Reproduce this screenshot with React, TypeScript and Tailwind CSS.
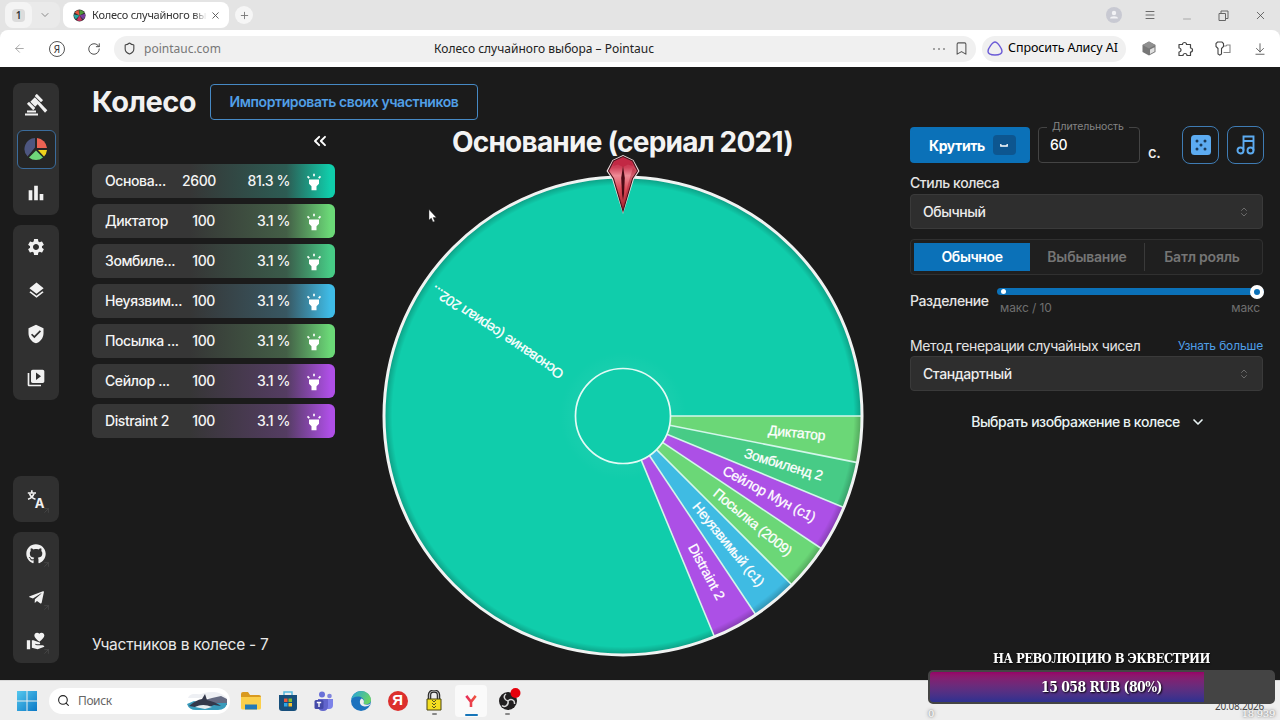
import type { ReactNode } from "react";
import {
  MdBarChart,
  MdHighlight,
  MdLayers,
  MdSettings,
  MdVerifiedUser,
  MdVideoLibrary,
  MdVolunteerActivism,
} from "react-icons/md";
import { FaGithub, FaTelegramPlane } from "react-icons/fa";
import {
  ArrowDownToLine,
  ArrowLeft,
  ArrowUpRight,
  Bookmark,
  ChevronDown,
  ChevronsLeft,
  ChevronsUpDown,
  Menu,
  Minus,
  Plus,
  RotateCw,
  Search,
  Shield,
  X,
} from "lucide-react";

const lots = [
  { name: "Основа...", amount: "2600", chance: "81.3 %", fade: "via-[#10cdab]/25 to-[#10cdab]" },
  { name: "Диктатор", amount: "100", chance: "3.1 %", fade: "via-[#6bd877]/25 to-[#6bd877]" },
  { name: "Зомбиле...", amount: "100", chance: "3.1 %", fade: "via-[#47cb86]/25 to-[#47cb86]" },
  { name: "Неуязвим...", amount: "100", chance: "3.1 %", fade: "via-[#3fbbe6]/25 to-[#3fbbe6]" },
  { name: "Посылка ...", amount: "100", chance: "3.1 %", fade: "via-[#6bd877]/25 to-[#6bd877]" },
  { name: "Сейлор ...", amount: "100", chance: "3.1 %", fade: "via-[#ae4fe6]/25 to-[#ae4fe6]" },
  { name: "Distraint 2", amount: "100", chance: "3.1 %", fade: "via-[#ae4fe6]/25 to-[#ae4fe6]" },
];

// from / to are the radii between which the label runs
const slices = [
  { label: "Диктатор", weight: 100, color: "#6bd777", from: 146, to: 203 },
  { label: "Зомбиленд 2", weight: 100, color: "#47cb86", from: 127, to: 208 },
  { label: "Сейлор Мун (с1)", weight: 100, color: "#ac50e6", from: 114, to: 217 },
  { label: "Посылка (2009)", weight: 100, color: "#6bd777", from: 119, to: 216 },
  { label: "Неуязвимый (с1)", weight: 100, color: "#3fbbe3", from: 114, to: 218 },
  { label: "Distraint 2", weight: 100, color: "#ac50e6", from: 146, to: 207 },
  { label: "Основание (сериал 202...", weight: 2600, color: "#10cdab", from: 73, to: 229 },
];

const R = 239;
const HUB = 47.5;

function point(r: number, deg: number) {
  const a = (deg * Math.PI) / 180;
  return `${(r * Math.cos(a)).toFixed(2)} ${(r * Math.sin(a)).toFixed(2)}`;
}

function Wheel() {
  const total = slices.reduce((sum, s) => sum + s.weight, 0);
  let angle = 0;
  const parts = slices.map((s) => {
    const start = angle;
    angle += (s.weight / total) * 360;
    return { ...s, start, end: angle };
  });

  return (
    <svg className="block" width="484" height="484" viewBox="-242 -242 484 484">
      <defs>
        <radialGradient id="edge" gradientUnits="userSpaceOnUse" cx="0" cy="0" r={R}>
          <stop offset="0.965" stopColor="#000" stopOpacity="0" />
          <stop offset="1" stopColor="#000" stopOpacity="0.25" />
        </radialGradient>
        <radialGradient id="glow" gradientUnits="userSpaceOnUse" cx="0" cy="0" r="64">
          <stop offset="0.7" stopColor="#fff" stopOpacity="0.04" />
          <stop offset="1" stopColor="#fff" stopOpacity="0" />
        </radialGradient>
      </defs>
      {parts.map((p) => (
        <path
          key={p.label}
          d={`M0 0L${point(R, p.start)}A${R} ${R} 0 ${p.end - p.start > 180 ? 1 : 0} 1 ${point(R, p.end)}Z`}
          fill={p.color}
        />
      ))}
      <circle r={R} fill="url(#edge)" />
      <circle r="64" fill="url(#glow)" />
      {parts.map((p) => (
        <path
          key={p.label}
          d={`M${point(HUB, p.start)}L${point(R, p.start)}`}
          stroke="#d3f7ea"
          strokeWidth="1.6"
        />
      ))}
      <circle r={R} fill="none" stroke="#f0f3f2" strokeWidth="3" />
      <circle r={HUB} fill="#10cdab" stroke="#e2fbf5" strokeWidth="1.7" />
      {parts.map((p) => (
        <text
          key={p.label}
          transform={`rotate(${(p.start + p.end) / 2})`}
          x={p.from}
          y="4.5"
          textLength={p.to - p.from}
          className="fill-white stroke-white/60 font-['Liberation_Sans',sans-serif] text-[14px]"
          strokeWidth="0.5"
        >
          {p.label}
        </text>
      ))}
    </svg>
  );
}

function Pointer() {
  return (
    <svg className="absolute top-[-20px] left-[225px]" width="34" height="61" viewBox="0 0 34 61">
      <defs>
        <linearGradient id="gem" x1="0" y1="0" x2="0" y2="1">
          <stop offset="0" stopColor="#b3243f" />
          <stop offset="0.2" stopColor="#cf4058" />
          <stop offset="0.35" stopColor="#ee8a96" />
          <stop offset="0.6" stopColor="#dd4a58" />
          <stop offset="1" stopColor="#a01f2c" />
        </linearGradient>
      </defs>
      <path d="M17 1L27.500 6L33.500 17L28 25L17 60L6 25L0.500 17L6.500 6Z" fill="#efdfe0" />
      <path
        d="M17 2.500L26.500 7L31.500 17L26.500 24.500L17 57L7.500 24.500L2.500 17L7.500 7Z"
        fill="url(#gem)"
        stroke="#4a101a"
        strokeWidth="1.100"
      />
      <path d="M17 3.500L25.500 7.500L27 12L22 10.500L17 13L12 10.500L7 12L8.500 7.500Z" fill="#c22844" />
      <path d="M27 14L30.500 17L26 24L17 54L22 30Z" fill="#a51b30" opacity="0.400" />
      <path d="M17 12L18.800 24L18 40L17 46L16 40L15.200 24Z" fill="#4a0a14" />
    </svg>
  );
}

function NavItem({ children, active, arrow }: { children: ReactNode; active?: boolean; arrow?: boolean }) {
  return (
    <div className="relative flex flex-1 items-center justify-center">
      <div
        className={
          active
            ? "flex h-[39px] w-[39px] items-center justify-center rounded-md border border-[#3b6c9c] bg-[#252525]"
            : "flex items-center justify-center"
        }
      >
        {children}
      </div>
      {arrow && <ArrowUpRight className="absolute right-[8px] bottom-[7px] text-[#4b4b4b]" size={9} />}
    </div>
  );
}

function Sidebar() {
  const group = "flex w-[46px] flex-col rounded-lg bg-[#303030]";
  return (
    <nav className="flex w-[46px] shrink-0 flex-col text-[#f1f1f1]">
      <div className={`${group} h-[132px]`}>
        <NavItem>
          <svg width="24" height="24" viewBox="0 0 24 24" fill="currentColor">
            <g transform="translate(11 9) rotate(45)">
              <rect x="-4.500" y="-7" width="9" height="3" rx="0.700" />
              <rect x="-3.400" y="-3.200" width="6.800" height="6.400" />
              <rect x="-4.500" y="4" width="9" height="3" rx="0.700" />
            </g>
            <path d="M13 10.500L15 8.500L23.300 17.200L21 19.700Z" />
            <path d="M3 17.500H12V19.500H3ZM1 20.500H14V22.500H1Z" />
          </svg>
        </NavItem>
        <NavItem active>
          <svg width="24" height="24" viewBox="-12 -12 24 24">
            <path d="M-1 -1.500L-1 -11A11 11 0 0 0 -8.500 7.500Z" fill="#4d5680" />
            <path d="M1 -1V-11A11 11 0 0 1 11 -1Z" fill="#ec6253" />
            <path d="M2 1H11A11 11 0 0 1 8 7.500Z" fill="#f0d21c" />
            <path d="M0 1.500L7 8.500A11 11 0 0 1 -7 8.500Z" fill="#6fd67a" />
          </svg>
        </NavItem>
        <NavItem><MdBarChart size={22} /></NavItem>
      </div>
      <div className={`${group} mt-[10px] h-[175px]`}>
        <NavItem><MdSettings size={20} /></NavItem>
        <NavItem><MdLayers size={19} /></NavItem>
        <NavItem><MdVerifiedUser size={20} /></NavItem>
        <NavItem><MdVideoLibrary size={20} /></NavItem>
      </div>
      <div className={`${group} mt-[76px] h-[46px]`}>
        <NavItem arrow>
          <svg width="20" height="20" viewBox="0 0 20 20" fill="currentColor">
            <g fill="none" stroke="currentColor" strokeWidth="1.700">
              <path d="M5.800 1.200V3.500M1.800 4H10" />
              <path d="M3.500 4.500Q5 9 9.500 10.200M8 4.500Q6.500 9 2 10.200" />
            </g>
            <text x="8.800" y="18.500" className="font-['Inter',sans-serif] text-[13px] font-bold">A</text>
          </svg>
        </NavItem>
      </div>
      <div className={`${group} mt-[10px] h-[131px]`}>
        <NavItem arrow><FaGithub size={20} /></NavItem>
        <NavItem arrow><FaTelegramPlane size={17} /></NavItem>
        <NavItem arrow><MdVolunteerActivism size={20} /></NavItem>
      </div>
    </nav>
  );
}

function LotList() {
  return (
    <div className="flex w-[243px] shrink-0 flex-col">
      <div className="flex h-[45px] justify-end pt-[12px] pr-[5px]">
        <ChevronsLeft size={20} strokeWidth={2.3} className="text-white" />
      </div>
      <ul className="flex flex-col gap-[6px] text-[14px] font-medium text-[#f4f4f4]">
        {lots.map((lot) => (
          <li
            key={lot.name}
            className={`flex h-[34px] items-center rounded-md bg-[#363636] bg-linear-to-r from-transparent from-40% via-80% ${lot.fade} to-98% pr-[11px] pb-px pl-[13px]`}
          >
            <span className="w-[77px] whitespace-nowrap">{lot.name}</span>
            <span className="w-[33px] text-right">{lot.amount}</span>
            <span className="flex-1 text-right">{lot.chance}</span>
            <MdHighlight size={20} className="mt-[3px] ml-[14px] text-white" />
          </li>
        ))}
      </ul>
    </div>
  );
}

function Select({ value }: { value: string }) {
  return (
    <div className="flex h-[35px] items-center justify-between rounded border border-[#3a3a3a] bg-[#2e2e2e] px-[12px] text-[14px] font-medium text-[#ececec]">
      {value}
      <ChevronsUpDown size={12} className="text-[#6a6a6a]" />
    </div>
  );
}

function Controls() {
  return (
    <aside className="flex w-[353px] shrink-0 flex-col">
      <div className="-mr-px flex h-[47px] items-end">
        <button className="mb-[1px] flex h-[36px] w-[120px] items-center rounded bg-[#0b71b8] pl-[19px] text-[14px] font-bold text-white">
          Крутить
          <span className="ml-[8px] flex h-[20px] w-[23px] items-center justify-center rounded bg-[#0d5690]">
            <svg width="8" height="3" viewBox="0 0 8 3" fill="none" stroke="#fff" strokeWidth="1.300">
              <path d="M0.800 0V2H7.200V0" />
            </svg>
          </span>
        </button>
        <fieldset className="mb-[1px] ml-[8px] h-[42px] w-[102px] rounded border border-[#444] px-[8px]">
          <legend className="px-[5px] text-[10.500px] leading-[12px] tracking-[-0.1px] text-[#858585]">Длительность</legend>
          <span className="block pl-[3px] text-[14px] leading-[24px] font-medium text-white">60</span>
        </fieldset>
        <span className="ml-[8px] pb-[1px] text-[15px] leading-[20px] font-medium text-[#eee]">с.</span>
        <button className="ml-auto flex h-[38px] w-[37px] items-center justify-center rounded-lg border border-[#3f7cb4]">
          <svg width="20" height="20" viewBox="0 0 20 20">
            <rect width="20" height="20" rx="3.500" fill="#5cabf1" />
            <g fill="#1b3a58">
              <circle cx="6" cy="6" r="1.500" />
              <circle cx="14" cy="6" r="1.500" />
              <circle cx="10" cy="10" r="1.500" />
              <circle cx="6" cy="14" r="1.500" />
              <circle cx="14" cy="14" r="1.500" />
            </g>
          </svg>
        </button>
        <button className="ml-[8px] flex h-[38px] w-[37px] items-center justify-center rounded-lg border border-[#3f7cb4] text-[#5cabf1]">
          <svg width="20" height="20" viewBox="0 0 20 20" fill="none" stroke="currentColor" strokeWidth="1.900">
            <circle cx="4.500" cy="15.500" r="3" />
            <circle cx="14.500" cy="15.500" r="3" />
            <path d="M7.500 15.500V1.500H17.500V15.500M7.500 6H17.500" />
          </svg>
        </button>
      </div>

      <label className="mt-[9px] text-[14px] leading-[20px] font-medium text-[#e4e4e4]">Стиль колеса</label>
      <div className="mt-px"><Select value="Обычный" /></div>

      <div className="mt-[10px] flex h-[36px] items-center rounded border border-[#303030] bg-[#1f1f1f] px-[3px] text-center text-[14px] font-semibold text-[#757575]">
        <div className="h-[28px] w-[116px] bg-[#0b71b8] leading-[27px] text-white">Обычное</div>
        <div className="h-[28px] w-[115px] border-r border-[#3a3a3a] leading-[27px] tracking-[-0.2px]">Выбывание</div>
        <div className="h-[28px] flex-1 leading-[27px] tracking-[-0.2px]">Батл рояль</div>
      </div>

      <div className="mt-[9px] flex h-[47px]">
        <span className="w-[87px] pt-[7px] text-[14px] leading-[20px] font-medium text-[#e4e4e4]">Разделение</span>
        <div className="flex-1 pt-[4px]">
          <div className="-mr-px flex h-[7px] items-center justify-between rounded-full bg-[#0b71b8] pl-[4px]">
            <span className="h-[5px] w-[5px] rounded-full bg-white" />
            <span className="h-[14px] w-[14px] rounded-full border-[4px] border-white bg-[#0b71b8]" />
          </div>
          <div className="flex justify-between pt-[4px] pr-[3px] pl-[3px] text-[12px] leading-[18px] tracking-[-0.1px] text-[#6f6f6f]">
            <span>макс / 10</span>
            <span>макс</span>
          </div>
        </div>
      </div>

      <div className="mt-[5px] flex h-[20px] items-center justify-between leading-[20px]">
        <span className="text-[14px] tracking-[-0.4px] text-[#e4e4e4]">Метод генерации случайных чисел</span>
        <a className="text-[12px] tracking-[-0.15px] text-[#4f9fe8]">Узнать больше</a>
      </div>
      <Select value="Стандартный" />

      <button className="mt-[21px] flex items-center justify-center gap-[10px] pl-[4px] text-[14px] leading-[20px] font-medium tracking-[-0.45px] text-[#e9f3f4]">
        Выбрать изображение в колесе
        <ChevronDown size={16} strokeWidth={2.5} />
      </button>
    </aside>
  );
}

function BrowserBar() {
  return (
    <header className="h-[67px] shrink-0 bg-[#e4e4e4] font-['Noto_Sans',sans-serif] text-[#333]">
      <div className="flex h-[30px] items-center pr-[13px] pl-[5px]">
        <div className="flex h-[26px] w-[55px] items-center rounded-lg bg-[#eaeaea]">
          <div className="flex h-[26px] w-[27px] items-center justify-center rounded-lg bg-[#f4f4f4]">
            <span className="rounded bg-[#dcdcdc] px-[4px] text-[10px] leading-[13px] font-semibold">1</span>
          </div>
          <ChevronDown size={12} className="ml-[7px] text-[#888]" />
        </div>
        <div className="ml-[3px] flex h-[26px] w-[166px] items-center rounded-lg bg-white pl-[10px]">
          <svg className="shrink-0" width="13" height="13" viewBox="-7 -7 14 14">
            <circle r="6.500" fill="#333" />
            <path d="M0 0V-6A6 6 0 0 1 5 -3Z" fill="#4d9b3a" />
            <path d="M0 0L6 -2A6 6 0 0 1 4 4Z" fill="#7a3fa0" />
            <path d="M0 0L3 5A6 6 0 0 1 -3 5Z" fill="#c73562" />
            <path d="M0 0L-4 4A6 6 0 0 1 -6 -1Z" fill="#25a9a4" />
            <path d="M0 0L-5 -3A6 6 0 0 1 -1 -6Z" fill="#e3573e" />
          </svg>
          <div className="ml-[6px] w-[115px] shrink-0 overflow-hidden mask-r-from-88% text-[11px] tracking-[-0.25px] whitespace-nowrap">
            Колесо случайного выбора
          </div>
          <X size={11} className="ml-[3px] shrink-0 text-[#555]" />
        </div>
        <div className="ml-[6px] flex h-[18px] w-[18px] items-center justify-center rounded-full bg-[#f6f6f6]">
          <Plus size={11} className="text-[#777]" />
        </div>
        <div className="ml-auto flex items-center text-[#444]">
          <svg width="16" height="16" viewBox="0 0 16 16">
            <circle cx="8" cy="8" r="8" fill="#c8c9d2" />
            <circle cx="8" cy="6" r="2.200" fill="#f2f2f5" />
            <path d="M4 11.500C4 8.500 12 8.500 12 11.500Z" fill="#f2f2f5" />
          </svg>
          <Menu size={12} strokeWidth={1.5} className="ml-[22px]" />
          <Minus size={12} strokeWidth={1.3} className="mt-[7px] ml-[25px] text-[#888]" />
          <svg className="ml-[25px]" width="11" height="11" viewBox="0 0 11 11" fill="none" stroke="#666">
            <path d="M1 3.500H7.500V10.500H1ZM3 3V1H10V8.500H8" />
          </svg>
          <X size={13} strokeWidth={1.4} className="ml-[25px]" />
        </div>
      </div>

      <div className="flex h-[37px] items-center rounded-t-lg bg-white pr-[13px] pl-[13px]">
        <ArrowLeft size={13} strokeWidth={1.5} className="text-[#999]" />
        <span className="ml-[23px] flex h-[16px] w-[16px] items-center justify-center rounded-full border border-[#555] text-[10px] leading-none">Я</span>
        <RotateCw size={14} strokeWidth={1.6} className="ml-[22px] text-[#444]" />
        <div className="ml-[13px] flex h-[26px] w-[862px] items-center rounded-full bg-[#f0f0f0] pr-[7px] pl-[9px]">
          <Shield size={13} className="text-[#444]" />
          <span className="ml-[8px] w-[80px] text-[12px] text-[#777]">pointauc.com</span>
          <span className="ml-[209px] w-[222px] text-center text-[12px] whitespace-nowrap text-[#222]">
            Колесо случайного выбора – Pointauc
          </span>
          <span className="ml-auto flex gap-[3px]">
            <i className="h-[2px] w-[2px] rounded-full bg-[#888]" />
            <i className="h-[2px] w-[2px] rounded-full bg-[#888]" />
            <i className="h-[2px] w-[2px] rounded-full bg-[#888]" />
          </span>
          <Bookmark size={15} strokeWidth={1.7} className="ml-[9px] text-[#555]" />
        </div>
        <div className="ml-[6px] flex h-[26px] w-[144px] items-center rounded-full bg-[#f0f0f0] pl-[5px] text-[12.500px] tracking-[-0.1px] whitespace-nowrap text-black">
          <svg className="mr-[5px]" width="16" height="15" viewBox="0 0 16 15" fill="none" stroke="#6b5bd6" strokeWidth="1.400">
            <path d="M8 1C10.500 1 15 7.500 15 10.300C15 13.300 12 14 8 14S1 13.300 1 10.300C1 7.500 5.500 1 8 1Z" />
          </svg>
          Спросить Алису AI
        </div>
        <div className="ml-auto flex items-center text-[#444]">
          <svg width="14" height="15" viewBox="0 0 14 15">
            <path d="M7 0.500L13.500 4V11L7 14.500L0.500 11V4Z" fill="#777" />
            <path d="M0.500 4L7 7.500L13.500 4L7 0.500Z" fill="#909090" />
            <path d="M8 8.500L12.500 6.200V10.500L8 13Z" fill="#e0e0e0" />
          </svg>
          <svg className="ml-[22px]" width="16" height="16" viewBox="0 0 16 16" fill="none" stroke="currentColor" strokeWidth="1.200" strokeLinejoin="round">
            <path d="M1 3.500H4.500A2 2 0 1 1 8.500 3.500H12.500V7A2 2 0 1 1 12.500 11V14.500H9A2 2 0 0 0 5 14.500H1V11A2 2 0 0 0 1 7Z" />
          </svg>
          <svg className="ml-[21px]" width="16" height="15" viewBox="0 0 16 15" fill="none" stroke="currentColor" strokeWidth="1.100">
            <path d="M3 7.500L1 5.500V2.500L2.500 1H7L8.500 2.500V5.500L6.500 7.500V13L4.800 14.200L3 13Z" />
            <path d="M9 5H11L12 4H15V11.500H8.500" stroke="#888" />
          </svg>
          <ArrowDownToLine size={14} strokeWidth={1.4} className="ml-[22px]" />
        </div>
      </div>
    </header>
  );
}

function TaskIcon({ children, open, active }: { children: ReactNode; open?: boolean; active?: boolean }) {
  return (
    <div
      className={`relative flex h-[32px] w-[32px] items-center justify-center rounded ${active ? "bg-[#fafafa]" : ""}`}
    >
      {children}
      {open && <span className="absolute bottom-[2px] h-[2px] w-[5px] rounded-full bg-[#888]" />}
      {active && <span className="absolute bottom-[1px] h-[2px] w-[13px] rounded-full bg-[#1675b9]" />}
    </div>
  );
}

function Taskbar() {
  return (
    <footer className="flex h-[40px] shrink-0 items-center border-t border-[#d8d8d8] bg-[#eeeeee] pl-[17px]">
      <svg width="20" height="20" viewBox="0 0 20 20">
        <defs>
          <linearGradient id="win" x1="0" y1="0" x2="1" y2="1">
            <stop offset="0" stopColor="#55c8ee" />
            <stop offset="1" stopColor="#0a78c6" />
          </linearGradient>
        </defs>
        <path d="M0 0H9.500V9.500H0ZM10.500 0H20V9.500H10.500ZM0 10.500H9.500V20H0ZM10.500 10.500H20V20H10.500Z" fill="url(#win)" />
      </svg>
      <div className="ml-[12px] flex h-[26px] w-[181px] items-center rounded-full bg-white pr-[2px] pl-[8px]">
        <Search size={13} className="text-[#222]" />
        <span className="ml-[8px] flex-1 font-['Noto_Sans',sans-serif] text-[12px] tracking-[-0.4px] text-[#666]">Поиск</span>
        <svg width="41" height="20" viewBox="0 0 41 20">
          <path d="M2 5C7 1 11 5 17 2C26 0 34 1 40 7H1Z" fill="#eef0f4" />
          <path d="M17 9L25 7L34 5L40 8V14H17Z" fill="#656b82" />
          <path d="M0 13L7 10L15 12L40 12Q39 19 31 19H9Q2 19 0 13Z" fill="#389bbb" />
          <path d="M2 15Q9 9 15 8L18 3L20 9Q29 11 34 15L27 14L22 16Q14 13 8 16Z" fill="#34394b" />
          <path d="M8 16Q16 12 25 16L18 18Z" fill="#e9eef1" />
        </svg>
      </div>
      <div className="ml-[5px] flex gap-[4.700px]">
        <TaskIcon>
          <svg width="20" height="20" viewBox="0 0 20 20">
            <path d="M0 3Q0 1 2 1H7L9 4H18Q20 4 20 6V9H0Z" fill="#d99a20" />
            <path d="M0 6H20V17Q20 18.500 18 18.500H2Q0 18.500 0 17Z" fill="#fbcf4b" />
            <path d="M4 13.500H16V18.500H4Z" fill="#2379b8" />
          </svg>
        </TaskIcon>
        <TaskIcon>
          <svg width="20" height="20" viewBox="0 0 20 20">
            <path d="M6 5V1H14V5" fill="none" stroke="#55b9df" strokeWidth="1.500" />
            <path d="M1 4H19V17Q19 20 16 20H4Q1 20 1 17Z" fill="#174f7c" />
            <path d="M6 7.500H9.500V11H6Z" fill="#ee5739" />
            <path d="M10.500 7.500H14V11H10.500Z" fill="#83bd35" />
            <path d="M6 12H9.500V15.500H6Z" fill="#2fa6e7" />
            <path d="M10.500 12H14V15.500H10.500Z" fill="#fac12e" />
          </svg>
        </TaskIcon>
        <TaskIcon>
          <svg width="20" height="20" viewBox="0 0 20 20">
            <circle cx="8" cy="3.500" r="3" fill="#6970d8" />
            <circle cx="15.500" cy="5" r="2.300" fill="#7e83dd" />
            <path d="M11 8H19V14Q19 18 15 18H11Z" fill="#7c82e8" />
            <path d="M4 8H14V15Q14 20 9 20T4 15Z" fill="#6165cc" />
            <rect x="0.500" y="9" width="9" height="9" rx="1.500" fill="#444aa8" />
            <path d="M2.800 11.500H7.200M5 11.500V16" stroke="#fff" strokeWidth="1.300" />
          </svg>
        </TaskIcon>
        <TaskIcon>
          <svg width="20" height="20" viewBox="0 0 20 20">
            <defs>
              <linearGradient id="edgeTop" x1="0" y1="0" x2="1" y2="0.400">
                <stop offset="0" stopColor="#23a1df" />
                <stop offset="1" stopColor="#68d369" />
              </linearGradient>
            </defs>
            <circle cx="10" cy="10" r="10" fill="#1c72be" />
            <path d="M0.200 9C1 3.500 5.500 0 10 0C16 0 20 4.500 20 9C20 12 17 13.500 14.500 13.500C11.500 13.500 13 12 13 10C13 7.500 10 5.500 7 5.500C3.500 5.500 1 7 0.200 9Z" fill="url(#edgeTop)" />
            <path d="M10.500 7.500C8 9 8 15 13.500 15.500C16 15.700 18 14.500 18.500 14L19.500 12.500C17 14.500 11.500 14 12.800 11.500C13.500 9.500 12 8 10.500 7.500Z" fill="#eee" />
          </svg>
        </TaskIcon>
        <TaskIcon>
          <span className="flex h-[20px] w-[20px] items-center justify-center rounded-full bg-[#dc2f2d] font-['Liberation_Sans',sans-serif] text-[15px] font-bold text-white">Я</span>
        </TaskIcon>
        <TaskIcon open>
          <svg width="16" height="21" viewBox="0 0 16 21">
            <path d="M3.500 10V5A4.500 4 0 0 1 12.500 5V10" fill="none" stroke="#292929" strokeWidth="3.500" />
            <path d="M3.500 10V5A4.500 4 0 0 1 12.500 5V10" fill="none" stroke="#bbb" strokeWidth="1.200" />
            <path d="M1 9H15V20H1Z" fill="#f3de20" stroke="#4a4510" />
            <path d="M6 10L8 12L10 10M6 13L8 15L10 13M6 16L8 18L10 16" fill="none" stroke="#5a5420" />
          </svg>
        </TaskIcon>
        <TaskIcon active>
          <svg width="12" height="14" viewBox="0 0 14 16" fill="none" strokeWidth="3">
            <defs>
              <linearGradient id="ya" gradientUnits="userSpaceOnUse" x1="0" y1="0" x2="14" y2="0">
                <stop offset="0" stopColor="#e6285c" />
                <stop offset="1" stopColor="#f05a3c" />
              </linearGradient>
            </defs>
            <path d="M1.500 2L7 9L12.500 2M7 8V15" stroke="url(#ya)" />
          </svg>
        </TaskIcon>
        <TaskIcon open>
          <svg width="22" height="22" viewBox="0 0 22 22" className="overflow-visible">
            <circle cx="11" cy="11" r="9" fill="#211f20" />
            <g fill="none" stroke="#d8d8d8" strokeWidth="1.500">
              <path d="M11 11C7 10 6 6 9 4" />
              <path d="M11 11C14 8 18 10 17.500 14" />
              <path d="M11 11C12 15 8 18 5 15.500" />
            </g>
            <circle cx="18.500" cy="3" r="5" fill="#e5000b" />
          </svg>
        </TaskIcon>
      </div>
    </footer>
  );
}

// Stream widget floating over the desktop
function DonationGoal() {
  return (
    <div className="absolute top-[649px] left-[928px] w-[347px] font-['Roboto_Slab','DejaVu_Serif',serif] text-white">
      <div className="flex scale-x-86 justify-center text-[13.500px] leading-[18px] font-bold tracking-[-0.6px] whitespace-nowrap [text-shadow:0_1px_2px_#000]">
        НА РЕВОЛЮЦИЮ В ЭКВЕСТРИИ
      </div>
      <div className="relative mt-[3px] h-[34px] overflow-hidden rounded-[5px] border-2 border-[#444] bg-[#444]">
        <div className="h-full w-[80%] bg-linear-to-b from-[#970068] to-[#2d3090]" />
        <div className="absolute inset-0 scale-x-86 text-center text-[14.500px] leading-[30px] font-bold tracking-[-0.6px] [text-shadow:1px_1px_2px_#000]">
          15 058 RUB (80%)
        </div>
      </div>
      <div className="relative flex justify-between text-[10px] leading-[20px] tracking-[-0.3px] [text-shadow:0_0_2px_#777,0_0_4px_#888]">
        <span>0</span>
        <span>18 939</span>
        <span className="absolute top-[-8px] right-[11px] -z-10 font-['Noto_Sans',sans-serif] text-[10px] tracking-[-0.2px] text-[#444] [text-shadow:none]">
          20.08.2026
        </span>
      </div>
    </div>
  );
}

export default function App() {
  return (
    <div className="relative isolate flex h-[720px] w-[1280px] flex-col overflow-hidden bg-[#1b1b1b] font-['Inter',sans-serif]">
      <div className="-z-20 flex h-full flex-col">
        <BrowserBar />
        <main className="flex flex-1 pt-[16px] pr-[17px] pl-[13px] tracking-tight">
          <Sidebar />
          <div className="ml-[33px] flex flex-1 flex-col">
            <div className="flex h-[37px] items-center">
              <h1 className="w-[118px] text-[29px] font-bold tracking-[-0.5px] text-[#f1f1f1]">Колесо</h1>
              <button className="h-[36px] w-[268px] rounded border border-[#4689c4] text-[14px] font-semibold tracking-[-0.4px] whitespace-nowrap text-[#519fe6]">
                Импортировать своих участников
              </button>
            </div>
            <div className="-mt-[3px] flex h-[560px]">
              <div className="flex w-[243px] shrink-0 flex-col justify-between pt-[2px]">
                <LotList />
                <p className="pb-[20px] text-[15.500px] leading-[24px] tracking-[-0.25px] whitespace-nowrap text-[#e8e8e8]">
                  Участников в колесе - 7
                </p>
              </div>
              <section className="ml-[45.500px] flex w-[484px] shrink-0 flex-col">
                <h2 className="h-[57px] pt-[6px] text-center text-[28px] leading-[38px] font-bold tracking-[-0.78px] whitespace-nowrap text-[#f3f3f3]">
                  Основание (сериал 2021)
                </h2>
                <div className="relative">
                  <Wheel />
                  <Pointer />
                </div>
              </section>
              <div className="ml-auto"><Controls /></div>
            </div>
          </div>
        </main>
        <Taskbar />
      </div>
      <DonationGoal />
      <svg className="absolute top-[209px] left-[428px]" width="9" height="14" viewBox="0 0 9 14">
        <path d="M1 0.500V11L3.300 9L5 13L6.700 12.200L5 8.500H8.300Z" fill="#fff" stroke="#333" strokeWidth="0.400" />
      </svg>
    </div>
  );
}
